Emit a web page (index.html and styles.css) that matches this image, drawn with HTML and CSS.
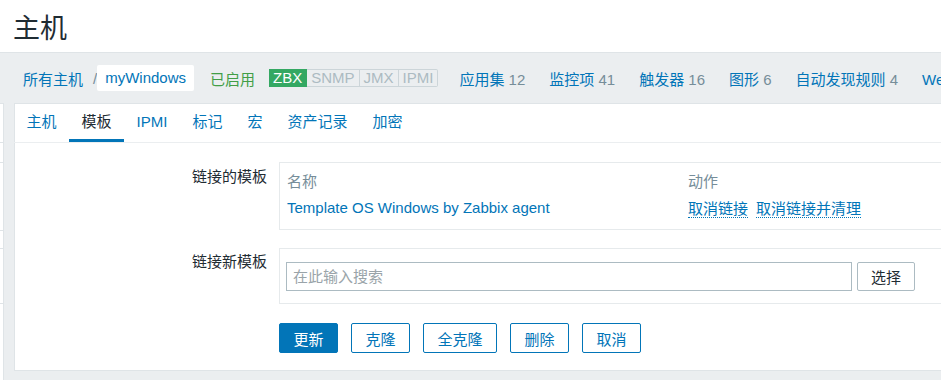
FILE: index.html
```html
<!DOCTYPE html>
<html>
<head>
  <title>主机 - myWindows</title>
  <link rel="stylesheet" href="styles.css">
</head>
<body>
  <header class="page-header">
    <h1>主机</h1>
  </header>

  <div class="layout">
    <!-- cut-off panel on the left edge -->
    <div class="side-strip">
      <div class="strip-row" style="height: 38px"></div>
      <div class="strip-row" style="height: 19px"></div>
      <div class="strip-row" style="height: 67px"></div>
      <div class="strip-row" style="height: 17px"></div>
      <div class="strip-row" style="height: 54px"></div>
      <div class="strip-row strip-last" style="height: 66px"></div>
    </div>

    <div class="content">
      <nav class="host-nav">
        <a class="crumb" href="#">所有主机</a>
        <span class="crumb-sep">/</span>
        <a class="crumb crumb-current" href="#">myWindows</a>
        <span class="status-enabled">已启用</span>
        <div class="avail">
          <span class="avail-tag avail-on">ZBX</span>
          <span class="avail-tag">SNMP</span>
          <span class="avail-tag">JMX</span>
          <span class="avail-tag">IPMI</span>
        </div>
        <a class="nav-link" href="#">应用集 <span class="count">12</span></a>
        <a class="nav-link" href="#">监控项 <span class="count">41</span></a>
        <a class="nav-link" href="#">触发器 <span class="count">16</span></a>
        <a class="nav-link" href="#">图形 <span class="count">6</span></a>
        <a class="nav-link" href="#">自动发现规则 <span class="count">4</span></a>
        <a class="nav-link" href="#">Web 场景</a>
      </nav>

      <div class="form-box">
        <ul class="tabs">
          <li><a href="#">主机</a></li>
          <li class="active"><a href="#">模板</a></li>
          <li><a href="#">IPMI</a></li>
          <li><a href="#">标记</a></li>
          <li><a href="#">宏</a></li>
          <li><a href="#">资产记录</a></li>
          <li><a href="#">加密</a></li>
        </ul>

        <div class="form">
          <div class="form-row">
            <label class="form-label label-linked">链接的模板</label>
            <div class="field-box linked-box">
              <div class="linked-table">
                <span class="th">名称</span>
                <span class="th">动作</span>
                <a class="tpl-name" href="#">Template OS Windows by Zabbix agent</a>
                <span class="actions">
                  <a class="action-link" href="#">取消链接</a>
                  <a class="action-link" href="#">取消链接并清理</a>
                </span>
              </div>
            </div>
          </div>

          <div class="form-row">
            <label class="form-label label-new">链接新模板</label>
            <div class="field-box new-box">
              <input class="search-input" type="text" placeholder="在此输入搜索">
              <button class="btn-select">选择</button>
            </div>
          </div>

          <div class="form-buttons">
            <button class="btn btn-primary">更新</button>
            <button class="btn">克隆</button>
            <button class="btn">全克隆</button>
            <button class="btn">删除</button>
            <button class="btn">取消</button>
          </div>
        </div>
      </div>
    </div>
  </div>
</body>
</html>
```

FILE: styles.css
```css
:root {
  --bg-page: #ebeef0;
  --bg-white: #ffffff;
  --border: #dfe4e7;
  --border-soft: #e6eaec;
  --text: #1f2c33;
  --text-muted: #768d99;
  --text-light: #acbbc2;
  --link: #0275b8;
  --green: #429e47;
  --green-bg: #34a863;
}

body {
  margin: 0;
  background-color: var(--bg-page);
  color: var(--text);
  font-family: "Liberation Sans", Arial, "Noto Sans CJK SC", sans-serif;
  font-size: 15px;
  overflow: hidden;
}
a {
  color: var(--link);
  text-decoration: none;
}

/* Page title */
.page-header {
  background-color: var(--bg-white);
  height: 52px;
  border-bottom: 1px solid var(--border);
  display: flex;
  align-items: center;
  padding-left: 13px;
}
.page-header h1 {
  margin: 0;
  font-size: 27px;
  font-weight: normal;
  color: var(--text);
}

.layout {
  display: flex;
}

.side-strip {
  width: 3px;
  margin-top: 50px;
  background-color: var(--bg-white);
  border-right: 1px solid var(--border);
  border-top: 1px solid var(--border);
  flex-shrink: 0;
}
.strip-row {
  border-bottom: 1px solid var(--border);
}
.strip-last {
  border-bottom: none;
}

.content {
  flex: 1;
  min-width: 0;
  margin-left: 10px;
  margin-right: -40px;
}

/* Host navigation bar */
.host-nav {
  height: 50px;
  display: flex;
  align-items: center;
  padding-left: 9px;
  white-space: nowrap;
}
.crumb-sep {
  color: var(--text-muted);
  margin: 0 0 0 10px;
}
.crumb-current {
  background-color: var(--bg-white);
  border-radius: 2px;
  padding: 0 8px;
  line-height: 26px;
}
.status-enabled {
  color: var(--green);
  margin-left: 16px;
}
.avail {
  display: flex;
  margin-left: 14px;
  margin-right: 21px;
}
.avail-tag {
  font-size: 15px;
  line-height: 16px;
  padding: 0 4px;
  border: 1px solid #ccd5d9;
  border-left: none;
  color: var(--text-light);
}
.avail-tag.avail-on {
  background-color: var(--green-bg);
  border-color: var(--green-bg);
  color: #ffffff;
}
.avail-tag:last-child {
  border-radius: 0 2px 2px 0;
}
.nav-link {
  margin-right: 24px;
}
.count {
  color: var(--text-muted);
}

/* White form container */
.form-box {
  background-color: var(--bg-white);
  border: 1px solid var(--border);
  margin-bottom: 9px;
}

.tabs {
  list-style: none;
  margin: 0 0 0 -1px;
  padding: 0;
  display: flex;
  height: 38px;
  border-bottom: 1px solid var(--bg-page);
}
.tabs li a {
  display: block;
  padding: 0 12.5px;
  line-height: 35px;
  border-bottom: 3px solid transparent;
}
.tabs li.active a {
  color: var(--text);
  border-bottom-color: var(--link);
}

.form {
  padding: 19px 0 17px;
}
.form-row {
  display: grid;
  grid-template-columns: 252px 1fr;
  column-gap: 12px;
  margin-bottom: 18px;
}
.form-label {
  text-align: right;
  line-height: 18px;
}
.label-linked {
  padding-top: 6px;
}
.label-new {
  padding-top: 5px;
}
.field-box {
  border: 1px solid var(--border-soft);
}

.linked-box {
  padding: 4px 7px 8px;
}
.linked-table {
  display: grid;
  grid-template-columns: 401px auto;
  grid-auto-rows: 27px;
  align-items: center;
}
.th {
  color: var(--text-muted);
}
.actions {
  display: flex;
  gap: 8px;
}
.action-link {
  border-bottom: 1px dotted var(--link);
  line-height: 17px;
  margin-top: 3px;
}

.new-box {
  display: flex;
  align-items: center;
  gap: 5px;
  padding: 13px 6px 12px;
}
.search-input {
  width: 566px;
  height: 29px;
  box-sizing: border-box;
  border: 1px solid var(--text-light);
  padding: 0 6px;
  font: inherit;
  color: var(--text);
}
.search-input::placeholder {
  color: #9aa4a9;
}
.btn-select {
  width: 58px;
  height: 29px;
  background-color: var(--bg-white);
  border: 1px solid var(--text-light);
  border-radius: 2px;
  font: inherit;
  color: var(--text);
  padding: 0;
}

.form-buttons {
  display: flex;
  gap: 13px;
  padding-left: 264px;
  margin-top: 19px;
}
.btn {
  height: 30px;
  padding: 0 13.5px;
  border: 1px solid var(--link);
  border-radius: 2px;
  background-color: var(--bg-white);
  color: var(--link);
  font: inherit;
}
.btn-primary {
  background-color: var(--link);
  color: #ffffff;
}
```
